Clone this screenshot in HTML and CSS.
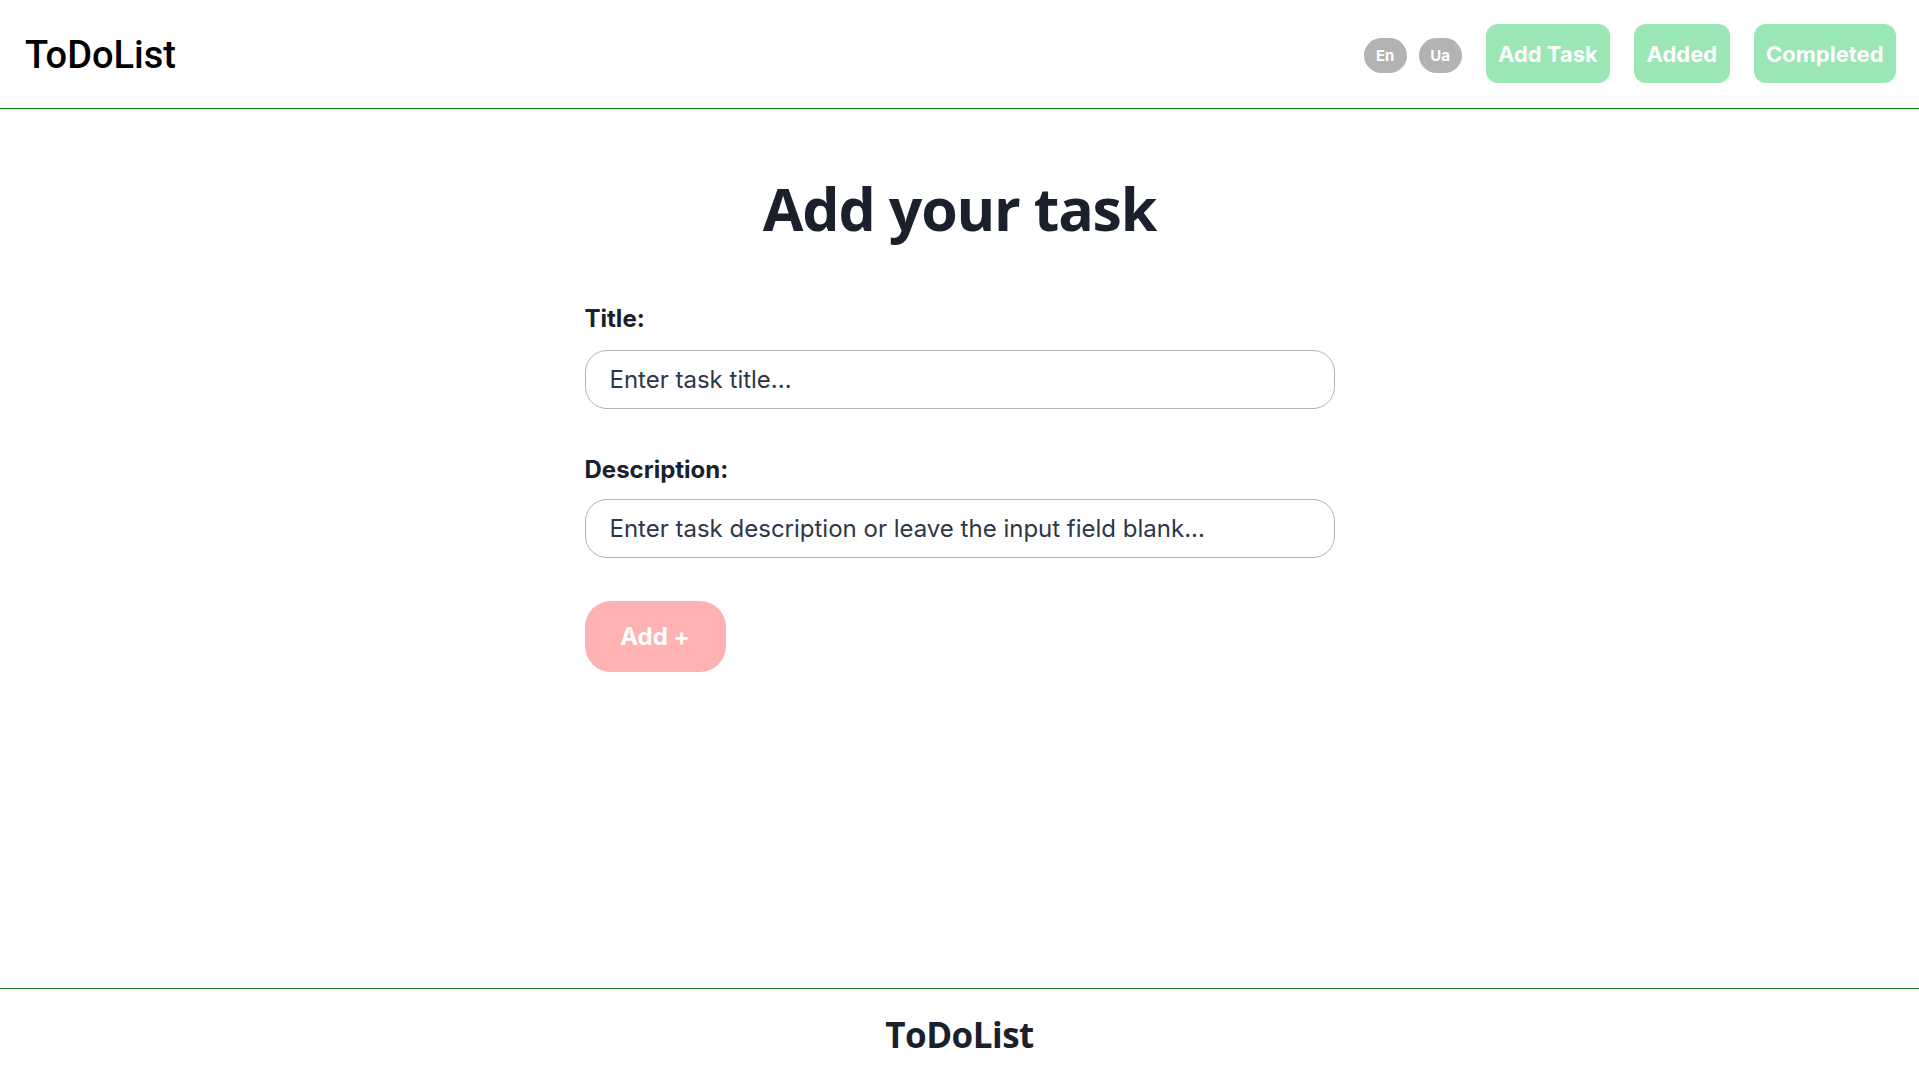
FILE: index.html
```html
<!DOCTYPE html>
<html lang="en">
<head>
<meta charset="utf-8">
<title>ToDoList</title>
<link rel="stylesheet" href="styles.css">
</head>
<body>
<header class="header">
  <div class="logo">ToDoList</div>
  <nav class="nav">
    <div class="langs">
      <button class="lang">En</button>
      <button class="lang">Ua</button>
    </div>
    <button class="nav-btn">Add Task</button>
    <button class="nav-btn">Added</button>
    <button class="nav-btn">Completed</button>
  </nav>
</header>
<main class="main">
  <h1 class="page-title">Add your task</h1>
  <form class="form">
    <label class="label" for="title">Title:</label>
    <input class="input" id="title" type="text" placeholder="Enter task title...">
    <label class="label label-gap" for="desc">Description:</label>
    <input class="input" id="desc" type="text" placeholder="Enter task description or leave the input field blank...">
    <div class="actions">
      <button class="add-btn" type="button">Add +</button>
    </div>
  </form>
</main>
<footer class="footer">
  <div class="footer-logo">ToDoList</div>
</footer>
</body>
</html>
```
FILE: styles.css
```css
* { box-sizing: border-box; }
html, body { margin: 0; padding: 0; }
body {
  min-height: 100vh;
  display: flex;
  flex-direction: column;
  background: #ffffff;
  font-family: Inter, "Liberation Sans", sans-serif;
  color: #1a202c;
}
.header {
  height: 109px;
  border-bottom: 1px solid #008000;
  display: flex;
  align-items: center;
  justify-content: space-between;
  padding: 0 23px 1px 25px;
}
.logo {
  font-family: Roboto, "Liberation Sans", sans-serif;
  font-weight: 500;
  font-size: 38px;
  color: #000;
  margin-top: 2px;
}
.nav {
  display: flex;
  align-items: center;
  gap: 24px;
}
.langs {
  display: flex;
  gap: 12px;
  margin-top: 4px;
}
.lang {
  width: 43px;
  height: 35px;
  border: none;
  border-radius: 18px;
  background: #b3b3b3;
  color: #fff;
  font-family: Inter, sans-serif;
  font-weight: 700;
  font-size: 15px;
  padding: 0;
}
.nav-btn {
  height: 59px;
  border: none;
  border-radius: 12px;
  background: #9ae6b4;
  color: #fff;
  font-family: Inter, sans-serif;
  font-weight: 700;
  font-size: 22px;
  padding: 0 12.4px;
}
.main {
  flex: 1;
  display: flex;
  flex-direction: column;
  align-items: center;
  padding-top: 63px;
}
.page-title {
  margin: 0;
  font-family: "Open Sans", sans-serif;
  font-weight: 700;
  font-size: 59px;
  line-height: 72px;
  letter-spacing: -1.2px;
  color: #1a202c;
}
.form {
  width: 750px;
  margin-top: 60px;
  display: flex;
  flex-direction: column;
}
.label {
  font-family: Inter, sans-serif;
  font-weight: 700;
  font-size: 24px;
  line-height: 29px;
  color: #1a202c;
  margin-bottom: 17px;
}
.label-gap { margin-top: 46px; margin-bottom: 15px; }
.input {
  width: 100%;
  height: 59px;
  border: 1px solid #b3b3b3;
  border-radius: 22px;
  padding: 0 24px;
  font-family: Inter, sans-serif;
  font-size: 24px;
  color: #2d3748;
  outline: none;
}
.input::placeholder { color: #2d3748; }
.actions { margin-top: 43px; }
.add-btn {
  width: 141px;
  height: 71px;
  border: none;
  border-radius: 26px;
  background: #feb2b2;
  color: #fff;
  font-family: Inter, sans-serif;
  font-weight: 700;
  font-size: 24px;
  padding: 0;
}
.footer {
  height: 91px;
  border-top: 1px solid #1f7a1f;
  display: flex;
  align-items: center;
  justify-content: center;
}
.footer-logo {
  font-family: "Open Sans", sans-serif;
  font-weight: 700;
  font-size: 35px;
  letter-spacing: -0.5px;
  color: #1a202c;
}
```
